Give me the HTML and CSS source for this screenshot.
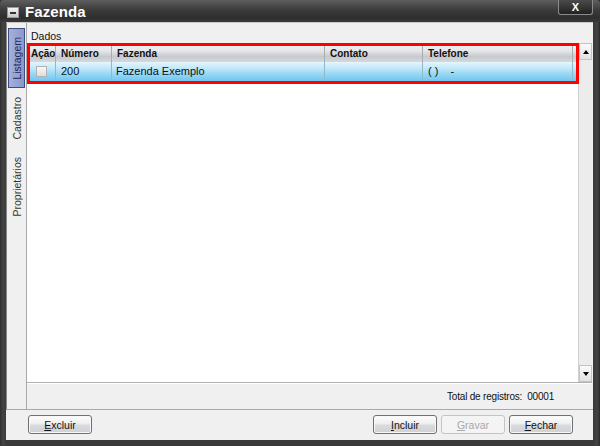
FILE: index.html
```html
<!DOCTYPE html>
<html>
<head>
<meta charset="utf-8">
<link rel="stylesheet" href="styles.css">
</head>
<body>
<div class="window">
  <div class="titlebar">
    <span class="ticon"><span class="tbar"></span></span>
    <span class="title">Fazenda</span>
    <span class="close">X</span>
  </div>
  <div class="client">
    <div class="main">
      <div class="tabs">
        <div class="tab active"><span>Listagem</span></div>
        <div class="tab"><span>Cadastro</span></div>
        <div class="tab tab-long"><span>Proprietários</span></div>
      </div>
      <div class="content">
        <div class="label">Dados</div>
        <div class="gridbox">
          <div class="table">
            <div class="highlight">
              <div class="hrow">
                <div class="hc c-acao">Ação</div>
                <div class="hc">Número</div>
                <div class="hc">Fazenda</div>
                <div class="hc">Contato</div>
                <div class="hc">Telefone</div>
                <div class="hc hc-fill"></div>
              </div>
              <div class="drow">
                <div class="dc c-acao"><span class="check"></span></div>
                <div class="dc">200</div>
                <div class="dc">Fazenda Exemplo</div>
                <div class="dc"></div>
                <div class="dc">( )&nbsp;&nbsp;&nbsp;&nbsp;-</div>
                <div class="dc dc-fill"></div>
              </div>
            </div>
          </div>
          <div class="scrollbar">
            <div class="sbtn"><span class="arr-up"></span></div>
            <div class="strack"></div>
            <div class="sbtn"><span class="arr-down"></span></div>
          </div>
        </div>
        <div class="status">
          <span>Total de registros:</span><span class="count">00001</span>
        </div>
      </div>
    </div>
    <div class="buttons">
      <button class="btn"><u>E</u>xcluir</button>
      <div class="spacer"></div>
      <button class="btn"><u>I</u>ncluir</button>
      <button class="btn disabled"><u>G</u>ravar</button>
      <button class="btn"><u>F</u>echar</button>
    </div>
  </div>
</div>
</body>
</html>
```
FILE: styles.css
```css
html, body {
  margin: 0;
  padding: 0;
}
body {
  width: 600px;
  height: 446px;
  overflow: hidden;
  font-family: "Liberation Sans", Arial, sans-serif;
  font-size: 11px;
  color: #111;
}
.window {
  width: 600px;
  height: 446px;
  display: flex;
  flex-direction: column;
  background: linear-gradient(90deg, #2e2e2e, #444 3px, #3a3a3a 6px, #3a3a3a 594px, #444 597px, #2a2a2a);
  box-sizing: border-box;
}
.titlebar {
  height: 22px;
  flex: none;
  display: flex;
  align-items: flex-start;
  background: linear-gradient(#5e5e5e, #3c3c3c 45%, #2e2e2e 80%, #3a3a3a);
  border-radius: 4px 4px 0 0;
}
.ticon {
  width: 10px;
  height: 9px;
  margin: 7px 0 0 7px;
  background: linear-gradient(#f4f4f4, #c8c8c8);
  border: 1px solid #999;
  display: flex;
  align-items: center;
  justify-content: center;
  flex: none;
}
.tbar {
  width: 6px;
  height: 2px;
  background: #333;
}
.title {
  margin: 3px 0 0 6px;
  font-weight: bold;
  font-size: 15px;
  line-height: 17px;
  color: #fff;
  letter-spacing: 0.1px;
}
.close {
  margin-left: auto;
  margin-right: 7px;
  width: 33px;
  height: 14px;
  border: 1px solid #8a8a8a;
  border-top: none;
  border-radius: 0 0 3px 3px;
  background: linear-gradient(#4a4a4a, #222);
  color: #fff;
  font-weight: bold;
  font-size: 11px;
  line-height: 14px;
  text-align: center;
}
.client {
  flex: 1;
  margin: 0 7px 6px 6px;
  background: #f0f0f0;
  display: flex;
  flex-direction: column;
  border-top: 1px solid #c8c8c8;
}
.main {
  flex: 1;
  display: flex;
  min-height: 0;
}
.tabs {
  width: 20px;
  flex: none;
  display: flex;
  flex-direction: column;
  padding-top: 5px;
  box-sizing: border-box;
  border-left: 1px solid #888;
}
.tab {
  width: 17px;
  height: 60px;
  margin-left: 1px;
  display: flex;
  align-items: center;
  justify-content: center;
  box-sizing: border-box;
  color: #3a3a28;
}
.tab span {
  writing-mode: vertical-rl;
  transform: rotate(180deg);
  font-size: 10.5px;
  line-height: 12px;
  white-space: nowrap;
}
.tab.active {
  background: linear-gradient(90deg, #a4b0dc, #8a98cc);
  border: 1px solid #3e4c80;
  color: #1e2a58;
}
.tab-long {
  height: 78px;
}
.content {
  flex: 1;
  display: flex;
  flex-direction: column;
  border-left: 1px solid #a8a8a8;
  padding-right: 3px;
}
.label {
  height: 20px;
  flex: none;
  padding: 7px 0 0 4px;
  box-sizing: border-box;
  font-size: 10.5px;
  line-height: 12px;
}
.gridbox {
  flex: 1;
  display: flex;
  background: #fff;
  border-bottom: 1px solid #b0b0b0;
  min-height: 0;
}
.table {
  flex: 1;
  background: #fff;
}
.highlight {
  position: relative;
}
.highlight::after {
  content: "";
  position: absolute;
  left: 0;
  top: 0;
  width: 552px;
  height: 41px;
  border: 3px solid #f00;
  box-sizing: border-box;
}
.hrow, .drow {
  display: grid;
  grid-template-columns: 29px 56px 213px 98px 150px 1fr;
}
.hrow {
  height: 19px;
  background: linear-gradient(#f4f4f4 0%, #e6e7e9 40%, #c6c9ce 72%, #d6d8db 100%);
}
.hc {
  font-weight: bold;
  font-size: 10px;
  line-height: 12px;
  padding: 5px 0 0 5px;
  border-right: 1px solid #a8abb0;
  white-space: nowrap;
  overflow: hidden;
}
.hc.c-acao {
  padding-left: 4px;
}
.hc-fill, .dc-fill {
  border-right: none;
}
.drow {
  height: 19px;
  background: linear-gradient(#e4f6fd 0%, #bfe7f9 35%, #94d6f4 65%, #70c7ee 100%);
}
.dc {
  font-size: 11px;
  line-height: 13px;
  padding: 3px 0 0 4px;
  border-right: 1px solid #8fb8c8;
  white-space: nowrap;
  overflow: hidden;
}
.dc:nth-child(2) {
  padding-left: 5px;
}
.dc:nth-child(5) {
  padding-left: 5px;
}
.dc.c-acao {
  padding: 4px 0 0 9px;
}
.check {
  display: block;
  width: 11px;
  height: 11px;
  box-sizing: border-box;
  border: 1px solid #b0b4b8;
  background: linear-gradient(#f8f8f8, #dedede);
}
.scrollbar {
  width: 14px;
  flex: none;
  display: flex;
  flex-direction: column;
  background: #f2f2f2;
  border-left: 1px solid #d0d0d0;
  box-sizing: border-box;
}
.sbtn {
  height: 17px;
  flex: none;
  display: flex;
  align-items: center;
  justify-content: center;
  background: linear-gradient(#fafafa, #e2e2e2);
  border: 1px solid #c4c4c4;
  box-sizing: border-box;
}
.strack {
  flex: 1;
  background: #ececec;
}
.arr-up, .arr-down {
  width: 0;
  height: 0;
  border-left: 3px solid transparent;
  border-right: 3px solid transparent;
}
.arr-up {
  border-bottom: 4px solid #000;
}
.arr-down {
  border-top: 4px solid #000;
}
.status {
  height: 25px;
  flex: none;
  display: flex;
  align-items: center;
  justify-content: flex-end;
  padding-right: 38px;
  font-size: 10px;
  letter-spacing: -0.2px;
  border-top: 1px solid #fff;
}
.count {
  margin-left: 5px;
}
.buttons {
  height: 31px;
  flex: none;
  display: flex;
  align-items: flex-start;
  padding: 5px 20px 0 22px;
  box-sizing: border-box;
  border-top: 1px solid #a8a8a8;
  gap: 4px;
}
.spacer {
  flex: 1;
}
.btn {
  width: 64px;
  height: 19px;
  padding: 0;
  margin: 0;
  font-family: "Liberation Sans", Arial, sans-serif;
  font-size: 10.5px;
  color: #111;
  border: 1px solid #6e7074;
  border-radius: 3px;
  background: linear-gradient(#fefefe 0%, #eeeeee 45%, #d8dadd 55%, #cfd1d4 100%);
  box-shadow: inset 0 0 0 1px #f8f8f8;
}
.btn u {
  text-decoration: underline;
}
.btn.disabled {
  color: #a8a8a8;
  border-color: #c4c4c4;
  background: #f4f4f4;
  box-shadow: none;
}
```
